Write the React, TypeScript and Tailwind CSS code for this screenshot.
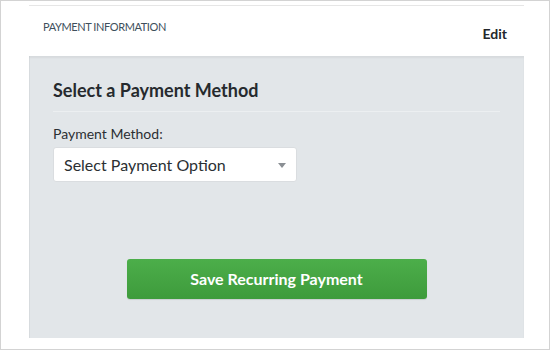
const font = { fontFamily: 'Lato, "Open Sans", sans-serif' };

const PaymentHeader = () => (
  <div className="flex items-start justify-between px-[14px] h-[51px] bg-white border-t border-[#e6e6e6]">
    <span className="mt-[13px] text-[11px] leading-[16px] tracking-[-0.4px] text-[#3e4f5c] uppercase">
      Payment Information
    </span>
    <button className="mt-[18px] mr-[3px] text-[14px] leading-[20px] font-bold text-[#23272b]">
      Edit
    </button>
  </div>
);

const PaymentMethodSelect = () => (
  <div className="relative w-[244px] h-[35px] mt-[3px] bg-white border border-[#dadde0] rounded-[3px]">
    <span className="absolute left-[10px] top-[7px] text-[16px] leading-[20px] text-[#2b2f33]">
      Select Payment Option
    </span>
    <span className="absolute right-[10px] top-[15px] w-0 h-0 border-l-[4px] border-r-[4px] border-t-[5px] border-l-transparent border-r-transparent border-t-[#8a8f94]" />
  </div>
);

export default function App() {
  return (
    <div
      className="w-[550px] h-[350px] bg-white border border-[#d3d3d3] overflow-hidden"
      style={font}
    >
      <div className="ml-[28px] mt-[4px] w-[495px]">
        <PaymentHeader />
        <div className="flex flex-col h-[282px] px-[24px] pt-[22px] bg-[#e2e6e9] shadow-[inset_0_2px_2px_rgba(0,0,0,0.05),inset_1px_0_0_rgba(0,0,0,0.03)]">
          <h2 className="text-[18px] leading-[24px] font-bold text-[#262a2e]">
            Select a Payment Method
          </h2>
          <div className="mt-[9px] h-px bg-[#eceff1]" />
          <label className="mt-[12px] text-[14px] leading-[20px] text-[#2b2f33]">
            Payment Method:
          </label>
          <PaymentMethodSelect />
          <div className="flex justify-center mt-[77px]">
            <button className="w-[300px] h-[40px] rounded-[3px] bg-gradient-to-b from-[#4cae4a] to-[#3e9b3c] text-white text-[16px] font-bold shadow-[0_1px_1px_rgba(0,0,0,0.1)]">
              Save Recurring Payment
            </button>
          </div>
        </div>
      </div>
    </div>
  );
}
